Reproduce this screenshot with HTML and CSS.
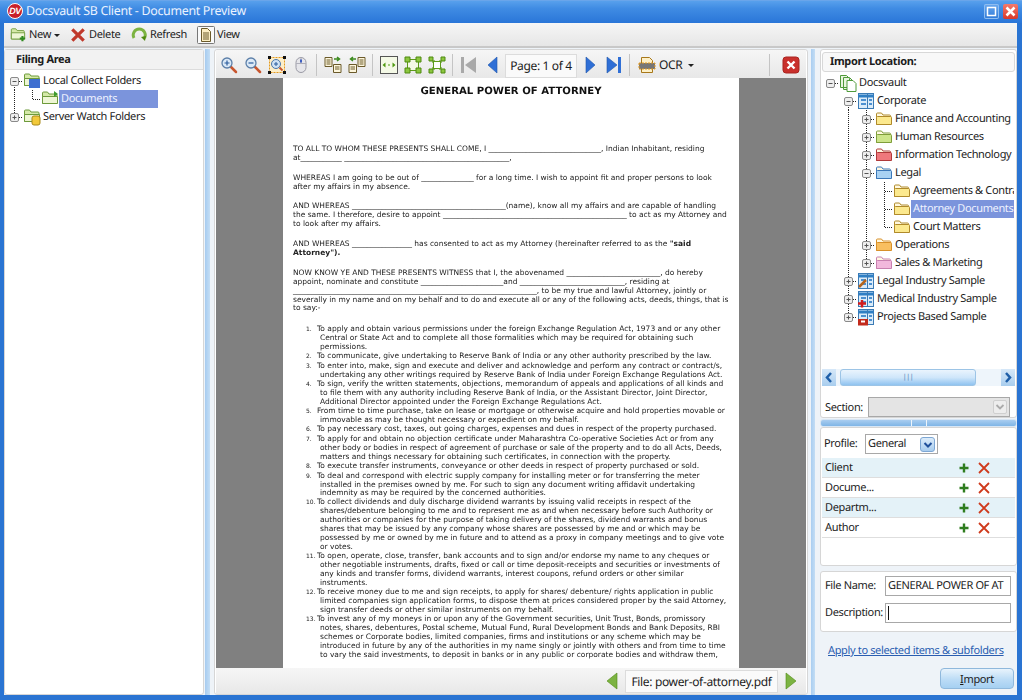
FILE: index.html
```html
<!DOCTYPE html>
<html lang="en">
<head>
<meta charset="utf-8">
<title>Docsvault SB Client - Document Preview</title>
<link rel="stylesheet" href="styles.css">
</head>
<body>
<svg class="defs" width="0" height="0" aria-hidden="true">
  <defs>
    <symbol id="cv" viewBox="0 0 18 18"><path d="M9.5 0V18" class="dot"/></symbol>
    <symbol id="ct" viewBox="0 0 18 18"><path d="M9.5 0V18M10 9.5H18" class="dot"/></symbol>
    <symbol id="cl" viewBox="0 0 18 18"><path d="M9.5 0V9.5H18" class="dot"/></symbol>
    <symbol id="cd" viewBox="0 0 18 18"><path d="M9.5 9V18M10 9.5H18" class="dot"/></symbol>
    <symbol id="cu" viewBox="0 0 18 18"><path d="M9.5 0V9.5H18" class="dot"/></symbol>
    <symbol id="cr" viewBox="0 0 18 18"><path d="M10 9.5H18" class="dot"/></symbol>
    <symbol id="plus" viewBox="0 0 18 18"><rect x="5.5" y="5.5" width="8" height="8" rx="1.5" fill="#eee" stroke="#8a8a8a"/><path d="M7.5 9.5h4M9.5 7.5v4" stroke="#555" fill="none"/></symbol>
    <symbol id="minus" viewBox="0 0 18 18"><rect x="5.5" y="5.5" width="8" height="8" rx="1.5" fill="#eee" stroke="#8a8a8a"/><path d="M7.5 9.5h4" stroke="#555" fill="none"/></symbol>
    <symbol id="folder" viewBox="0 0 18 18"><path d="M1.500 14.500V4q0-1 1-1h4l1.500 2h6.500q1 0 1 1v8.500z" fill="#fff8e0" stroke="currentColor"/><path d="M1.500 14.500V7.500q0-1 1-1h13q1 0 1 1v7z" fill="var(--fill)" stroke="currentColor"/></symbol>
    <symbol id="gfolder" viewBox="0 0 18 18"><path d="M1.500 13.500V3q0-1 1-1h4l1.500 2h7q1 0 1 1v8.500z" fill="#d5e9a8" stroke="#6d9a3a"/><path d="M1.500 13.500V6.500h15v7z" fill="#eef6d5" stroke="#6d9a3a"/></symbol>
    <symbol id="blue" viewBox="0 0 18 18"><rect x="1.500" y="1.500" width="15" height="15" fill="#dcecf9" stroke="#3b7bb5"/><path d="M1.500 4h15" stroke="#2f7fc4" stroke-width="3"/><path d="M10.500 1.500v15" stroke="#3b7bb5"/><path d="M4 7h5v2H4zM4 11h5v2H4zM12 7h3v2h-3zM12 11h3v2h-3z" fill="#4c90d0"/></symbol>
    <symbol id="pl" viewBox="0 0 14 14"><path d="M7 2.500v9M2.500 7h9" stroke="#2f7d1f" stroke-width="2.400" fill="none"/></symbol>
    <symbol id="xx" viewBox="0 0 14 14"><path d="M2 2l10 10M12 2L2 12" stroke="#cf3a1c" stroke-width="1.800" fill="none"/></symbol>
    <symbol id="lens" viewBox="0 0 18 18"><path d="M10.500 10.500l5.500 5.500" stroke="#c8562e" stroke-width="2.500" stroke-linecap="round"/><circle cx="7" cy="7" r="5" fill="#dbe9f7" stroke="#5c7fa8" stroke-width="1.300"/></symbol>
    <symbol id="pgs" viewBox="0 0 18 18"><path d="M1 1.500h7v9H1zM9.500 8.500H17v8H9.500z" fill="#fdf6dc" stroke="#6b5a2a"/><path d="M2.500 4h4M2.500 6h4M2.500 8h4M11 11h4.500M11 13h4.500" stroke="#6b5a2a"/><path d="M10 3h5M13 1l2.500 2L13 5" stroke="#3c8a1e" stroke-width="1.500" fill="none"/></symbol>
    <symbol id="corners" viewBox="0 0 18 18"><rect x="3.500" y="3.500" width="11" height="11" fill="#f4f9e6" stroke="#5d9a1a"/><path d="M1 1h5v5H1zM12 1h5v5h-5zM1 12h5v5H1zM12 12h5v5h-5z" fill="#8cc63f" stroke="#4f8a10"/></symbol>
  </defs>
</svg>
<div class="window">
  <header class="titlebar">
    <span class="logo">DV</span>
    <span class="title">Docsvault SB Client - Document Preview</span>
    <span class="winbtn max"><svg width="15" height="15" viewBox="0 0 15 15"><rect x="3.500" y="3.500" width="8" height="8" fill="none" stroke="#fff" stroke-width="1.500"/></svg></span>
    <span class="winbtn close"><svg width="15" height="15" viewBox="0 0 15 15"><path d="M3.500 3.500l8 8M11.500 3.500l-8 8" stroke="#fff" stroke-width="2.500"/></svg></span>
  </header>

  <nav class="mainbar">
    <span class="mbtn new"><svg class="i16" viewBox="0 0 18 18"><use href="#gfolder"/><path d="M14 10v6M11 13h6" stroke="#2f8a1f" stroke-width="2.400"/></svg>New<i class="caret"></i></span>
    <span class="mbtn del"><svg class="i16" viewBox="0 0 14 14"><path d="M2 2l10 10M12 2L2 12" stroke="#c0392b" stroke-width="2.800"/></svg>Delete</span>
    <span class="mbtn ref"><svg class="i16" viewBox="0 0 16 16"><path d="M3 11A6 6 0 1 1 13.500 11" fill="none" stroke="#7cb342" stroke-width="3"/><path d="M10 10l5-1-1 5z" fill="#4f8a10"/></svg>Refresh</span>
    <span class="mbtn view"><svg class="i18" viewBox="0 0 18 18"><rect x=".5" y=".5" width="17" height="17" rx="1" fill="#fafafa" stroke="#777"/><path d="M4.500 2.500h6l3 3v10h-9z" fill="#fbeec2" stroke="#6b5a2a"/><path d="M6 7h6M6 9h6M6 11h6M6 13h6" stroke="#6b5a2a"/></svg>View</span>
  </nav>

  <main class="workspace">
    <aside class="panel filing">
      <h2 class="filing-head">Filing Area</h2>
      <div class="tree left-tree">
        <div class="row"><svg class="c"><use href="#cd"/><use href="#minus"/></svg><svg class="c"><use href="#gfolder"/><rect x="6" y="7" width="11" height="9" fill="#3f6fd0"/></svg><span class="lbl">Local Collect Folders</span></div>
        <div class="row"><svg class="c"><use href="#cv"/></svg><svg class="c"><use href="#cl"/></svg><svg class="c"><use href="#gfolder"/><path d="M13 1l4 3-4 3z" fill="#3c9a2e"/></svg><span class="lbl sel">Documents</span></div>
        <div class="row"><svg class="c"><use href="#cu"/><use href="#plus"/></svg><svg class="c"><use href="#gfolder"/><rect x="9" y="8" width="8" height="9" rx="2" fill="#f2c93a" stroke="#a8891a"/></svg><span class="lbl">Server Watch Folders</span></div>
      </div>
    </aside>

    <div class="vsplit"></div>

    <section class="panel preview">
      <div class="doctools">
        <span class="tb"><svg class="i18"><use href="#lens"/><path d="M4.500 7h5M7 4.500v5" stroke="#2b5c9c" stroke-width="1.200"/></svg></span>
        <span class="tb"><svg class="i18"><use href="#lens"/><path d="M4.500 7h5" stroke="#2b5c9c" stroke-width="1.200"/></svg></span>
        <span class="tb"><svg class="i18"><rect x="1.500" y="1.500" width="15" height="15" fill="#fdeec8" stroke="#e59a1d" stroke-dasharray="2 1"/><path d="M0 0h3v3H0zM15 0h3v3h-3zM0 15h3v3H0zM15 15h3v3h-3z" fill="#111"/><circle cx="8" cy="8" r="4.500" fill="#cfe2f5" stroke="#4a76ab"/><path d="M6 8h4M8 6v4" stroke="#2b5c9c"/><path d="M11.500 11.500l3 3" stroke="#c8562e" stroke-width="2"/></svg></span>
        <span class="tb"><svg class="i18"><rect x="4" y="1.500" width="10" height="15" rx="5" fill="#e6e6ea" stroke="#9a9aa5"/><path d="M4 7.500h10M9 1.500v6" stroke="#b0b0ba"/><rect x="8" y="3.500" width="2" height="3" fill="#3f5fc0"/></svg></span>
        <i class="sep"></i>
        <span class="tb"><svg class="i18"><use href="#pgs"/></svg></span>
        <span class="tb"><svg class="i18"><g transform="matrix(-1 0 0 1 18 0)"><use href="#pgs"/></g></svg></span>
        <i class="sep"></i>
        <span class="tb"><svg class="i18"><rect x=".5" y=".5" width="17" height="17" fill="#f4f9e6" stroke="#555"/><path d="M2.500 9l3-2.500v5zM15.500 9l-3-2.500v5z" fill="#4f9a10"/><path d="M8 9h2" stroke="#4f9a10"/></svg></span>
        <span class="tb"><svg class="i18"><use href="#corners"/></svg></span>
        <span class="tb"><svg class="i18"><path d="M5 5l8 8M13 5l-8 8" stroke="#5d9a1a" stroke-width="3"/><rect x="5.500" y="5.500" width="7" height="7" fill="#fff" stroke="#5d9a1a"/><path d="M1 1h4v4H1zM13 1h4v4h-4zM1 13h4v4H1zM13 13h4v4h-4z" fill="#8cc63f" stroke="#4f8a10"/></svg></span>
        <i class="sep"></i>
        <span class="tb"><svg class="i18"><path d="M1 1h3v16H1z" fill="#a9a9a9"/><path d="M16 1v16L5 9z" fill="#a9a9a9"/></svg></span>
        <span class="tb"><svg class="i18"><path d="M13 1v16L4 9z" fill="#2f6fd6" stroke="#1f55aa" stroke-width=".6"/></svg></span>
        <span class="pagebox">Page: 1 of 4</span>
        <span class="tb"><svg class="i18"><path d="M5 1v16l9-8z" fill="#2f6fd6" stroke="#1f55aa" stroke-width=".6"/></svg></span>
        <span class="tb"><svg class="i18"><path d="M2 1v16l10-8z" fill="#2f6fd6" stroke="#1f55aa" stroke-width=".6"/><path d="M13 1h3v16h-3z" fill="#2f6fd6"/></svg></span>
        <i class="sep"></i>
        <span class="ocr"><svg class="i18"><path d="M3.500 1.500h8l3 3v12h-11z" fill="#fdf0c8" stroke="#a8781a"/><rect x="1" y="7" width="16" height="6" fill="#777" stroke="#e59a1d" stroke-dasharray="2 1"/></svg>OCR<i class="caret"></i></span>
        <span class="spring"></span>
        <i class="sep"></i>
        <span class="tb closedoc"><svg class="i18"><rect x="1" y="1" width="16" height="16" rx="3" fill="#c9302c" stroke="#a92420"/><path d="M5.500 5.500l7 7M12.500 5.500l-7 7" stroke="#fff" stroke-width="2.400"/></svg></span>
      </div>

      <div class="viewer">
        <article class="page">
          <h1 class="doc-title">GENERAL POWER OF ATTORNEY</h1>
          <p>TO ALL TO WHOM THESE PRESENTS SHALL COME, I ______________________________, Indian Inhabitant, residing<br>at___________ ____________________________________________,</p>
          <p>WHEREAS I am going to be out of ______________ for a long time. I wish to appoint fit and proper persons to look<br>after my affairs in my absence.</p>
          <p>AND WHEREAS _________________________________________(name), know all my affairs and are capable of handling<br>the same. I therefore, desire to appoint _________________________________________________ to act as my Attorney and<br>to look after my affairs.</p>
          <p>AND WHEREAS ________________ has consented to act as my Attorney (hereinafter referred to as the <b>"said<br>Attorney").</b></p>
          <p class="last">NOW KNOW YE AND THESE PRESENTS WITNESS that I, the abovenamed _________________________, do hereby<br>appoint, nominate and constitute ______________________and ____________________________, residing at<br>_________________________________________________________________, to be my true and lawful Attorney, jointly or<br>severally in my name and on my behalf and to do and execute all or any of the following acts, deeds, things, that is<br>to say:-</p>
          <div class="li"><span class="n">1.</span><span class="t">To apply and obtain various permissions under the foreign Exchange Regulation Act, 1973 and or any other<br>Central or State Act and to complete all those formalities which may be required for obtaining such<br>permissions.</span></div>
          <div class="li"><span class="n">2.</span><span class="t">To communicate, give undertaking to Reserve Bank of India or any other authority prescribed by the law.</span></div>
          <div class="li"><span class="n">3.</span><span class="t">To enter into, make, sign and execute and deliver and acknowledge and perform any contract or contract/s,<br>undertaking any other writings required by Reserve Bank of India under Foreign Exchange Regulations Act.</span></div>
          <div class="li"><span class="n">4.</span><span class="t">To sign, verify the written statements, objections, memorandum of appeals and applications of all kinds and<br>to file them with any authority including Reserve Bank of India, or the Assistant Director, Joint Director,<br>Additional Director appointed under the Foreign Exchange Regulations Act.</span></div>
          <div class="li"><span class="n">5.</span><span class="t">From time to time purchase, take on lease or mortgage or otherwise acquire and hold properties movable or<br>immovable as may be thought necessary or expedient on my behalf.</span></div>
          <div class="li"><span class="n">6.</span><span class="t">To pay necessary cost, taxes, out going charges, expenses and dues in respect of the property purchased.</span></div>
          <div class="li"><span class="n">7.</span><span class="t">To apply for and obtain no objection certificate under Maharashtra Co-operative Societies Act or from any<br>other body or bodies in respect of agreement of purchase or sale of the property and to do all Acts, Deeds,<br>matters and things necessary for obtaining such certificates, in connection with the property.</span></div>
          <div class="li"><span class="n">8.</span><span class="t">To execute transfer instruments, conveyance or other deeds in respect of property purchased or sold.</span></div>
          <div class="li"><span class="n">9.</span><span class="t">To deal and correspond with electric supply company for installing meter or for transferring the meter<br>installed in the premises owned by me. For such to sign any document writing affidavit undertaking<br>indemnity as may be required by the concerned authorities.</span></div>
          <div class="li"><span class="n">10.</span><span class="t">To collect dividends and duly discharge dividend warrants by issuing valid receipts in respect of the<br>shares/debenture belonging to me and to represent me as and when necessary before such Authority or<br>authorities or companies for the purpose of taking delivery of the shares, dividend warrants and bonus<br>shares that may be issued by any company whose shares are possessed by me and or which may be<br>possessed by me or owned by me in future and to attend as a proxy in company meetings and to give vote<br>or votes.</span></div>
          <div class="li"><span class="n">11.</span><span class="t">To open, operate, close, transfer, bank accounts and to sign and/or endorse my name to any cheques or<br>other negotiable instruments, drafts, fixed or call or time deposit-receipts and securities or investments of<br>any kinds and transfer forms, dividend warrants, interest coupons, refund orders or other similar<br>instruments.</span></div>
          <div class="li"><span class="n">12.</span><span class="t">To receive money due to me and sign receipts, to apply for shares/ debenture/ rights application in public<br>limited companies sign application forms, to dispose them at prices considered proper by the said Attorney,<br>sign transfer deeds or other similar instruments on my behalf.</span></div>
          <div class="li"><span class="n">13.</span><span class="t">To invest any of my moneys in or upon any of the Government securities, Unit Trust, Bonds, promissory<br>notes, shares, debentures, Postal scheme, Mutual Fund, Rural Development Bonds and Bank Deposits, RBI<br>schemes or Corporate bodies, limited companies, firms and institutions or any scheme which may be<br>introduced in future by any of the authorities in my name singly or jointly with others and from time to time<br>to vary the said investments, to deposit in banks or in any public or corporate bodies and withdraw them,</span></div>
        </article>
      </div>

      <div class="filebar">
        <svg class="i18"><path d="M14 1v16L4 9z" fill="#7cb342" stroke="#4f8a10" stroke-width=".6"/></svg>
        <span class="filebox">File: power-of-attorney.pdf</span>
        <svg class="i18"><path d="M4 1v16l10-8z" fill="#7cb342" stroke="#4f8a10" stroke-width=".6"/></svg>
      </div>
    </section>

    <div class="vsplit second"></div>

    <aside class="side">
      <section class="panel import">
        <h2 class="import-head">Import Location:</h2>
        <div class="tree right-tree">
          <div class="row"><svg class="c"><use href="#cr"/><use href="#minus"/></svg><svg class="c"><path d="M1.500 1.500h6l3 3v9h-9zM4.500 3.500h6l3 3v9h-9z" fill="#eaf5e0" stroke="#4f9a3a"/><path d="M8 6.500h6l3 3v8H8z" fill="#fff" stroke="#4f9a3a"/></svg><span class="lbl">Docsvault</span></div>
          <div class="row"><span class="c"></span><svg class="c"><use href="#cd"/><use href="#minus"/></svg><svg class="c"><use href="#blue"/></svg><span class="lbl">Corporate</span></div>
          <div class="row"><span class="c"></span><svg class="c"><use href="#cv"/></svg><svg class="c"><use href="#ct"/><use href="#plus"/></svg><svg class="c f-yellow"><use href="#folder"/></svg><span class="lbl">Finance and Accounting</span></div>
          <div class="row"><span class="c"></span><svg class="c"><use href="#cv"/></svg><svg class="c"><use href="#ct"/><use href="#plus"/></svg><svg class="c f-green"><use href="#folder"/></svg><span class="lbl">Human Resources</span></div>
          <div class="row"><span class="c"></span><svg class="c"><use href="#cv"/></svg><svg class="c"><use href="#ct"/><use href="#plus"/></svg><svg class="c f-red"><use href="#folder"/></svg><span class="lbl">Information Technology</span></div>
          <div class="row"><span class="c"></span><svg class="c"><use href="#cv"/></svg><svg class="c"><use href="#ct"/><use href="#minus"/></svg><svg class="c f-blue"><use href="#folder"/></svg><span class="lbl">Legal</span></div>
          <div class="row"><span class="c"></span><svg class="c"><use href="#cv"/></svg><svg class="c"><use href="#cv"/></svg><svg class="c"><use href="#ct"/></svg><svg class="c f-yellow"><use href="#folder"/></svg><span class="lbl">Agreements &amp; Contracts</span></div>
          <div class="row"><span class="c"></span><svg class="c"><use href="#cv"/></svg><svg class="c"><use href="#cv"/></svg><svg class="c"><use href="#ct"/></svg><svg class="c f-yellow"><use href="#folder"/></svg><span class="lbl sel">Attorney Documents</span></div>
          <div class="row"><span class="c"></span><svg class="c"><use href="#cv"/></svg><svg class="c"><use href="#cv"/></svg><svg class="c"><use href="#cl"/></svg><svg class="c f-yellow"><use href="#folder"/></svg><span class="lbl">Court Matters</span></div>
          <div class="row"><span class="c"></span><svg class="c"><use href="#cv"/></svg><svg class="c"><use href="#ct"/><use href="#plus"/></svg><svg class="c f-orange"><use href="#folder"/></svg><span class="lbl">Operations</span></div>
          <div class="row"><span class="c"></span><svg class="c"><use href="#cv"/></svg><svg class="c"><use href="#cl"/><use href="#plus"/></svg><svg class="c f-pink"><use href="#folder"/></svg><span class="lbl">Sales &amp; Marketing</span></div>
          <div class="row"><span class="c"></span><svg class="c"><use href="#ct"/><use href="#plus"/></svg><svg class="c"><use href="#blue"/><path d="M2 15l7-7" stroke="#b5651d" stroke-width="2.500"/></svg><span class="lbl">Legal Industry Sample</span></div>
          <div class="row"><span class="c"></span><svg class="c"><use href="#ct"/><use href="#plus"/></svg><svg class="c"><use href="#blue"/><path d="M5 10v7.500M1 13.500h8" stroke="#d21c1c" stroke-width="2.500"/></svg><span class="lbl">Medical Industry Sample</span></div>
          <div class="row"><span class="c"></span><svg class="c"><use href="#cl"/><use href="#plus"/></svg><svg class="c"><use href="#blue"/><rect x="1" y="11" width="10" height="6.500" fill="#c22a1c"/><path d="M4 13.500h4" stroke="#fff" stroke-width="2"/></svg><span class="lbl">Projects Based Sample</span></div>
        </div>
        <div class="hscroll">
          <span class="sb-btn"><svg width="14" height="17" viewBox="0 0 14 17"><path d="M9 4L5 8.500 9 13" fill="none" stroke="#1f5fa8" stroke-width="2.500"/></svg></span>
          <span class="sb-track"><span class="sb-thumb">|||</span></span>
          <span class="sb-btn"><svg width="14" height="17" viewBox="0 0 14 17"><path d="M5 4l4 4.500L5 13" fill="none" stroke="#1f5fa8" stroke-width="2.500"/></svg></span>
        </div>
        <div class="section-row">
          <label class="sec-label">Section:</label>
          <span class="sec-select"><span class="sec-arrow"><svg width="12" height="12" viewBox="0 0 12 12"><path d="M2.500 4L6 7.500 9.500 4" fill="none" stroke="#aaa" stroke-width="1.800"/></svg></span></span>
        </div>
      </section>

      <div class="hsplit"><span class="grip"></span></div>

      <section class="panel profile">
        <div class="profile-row">
          <label class="prof-label">Profile:</label>
          <span class="prof-select">General<span class="prof-arrow"><svg width="12" height="12" viewBox="0 0 12 12"><path d="M2.500 4L6 7.500 9.500 4" fill="none" stroke="#1f4f9a" stroke-width="2"/></svg></span></span>
        </div>
        <div class="meta alt"><span class="meta-name">Client</span><svg class="act"><use href="#pl"/></svg><svg class="act"><use href="#xx"/></svg></div>
        <div class="meta"><span class="meta-name">Docume...</span><svg class="act"><use href="#pl"/></svg><svg class="act"><use href="#xx"/></svg></div>
        <div class="meta alt"><span class="meta-name">Departm...</span><svg class="act"><use href="#pl"/></svg><svg class="act"><use href="#xx"/></svg></div>
        <div class="meta"><span class="meta-name">Author</span><svg class="act"><use href="#pl"/></svg><svg class="act"><use href="#xx"/></svg></div>
      </section>

      <section class="panel fields">
        <div class="field"><label>File Name:</label><span class="input">GENERAL POWER OF AT</span></div>
        <div class="field"><label>Description:</label><span class="input"><i class="cursor"></i></span></div>
      </section>

      <a class="apply" href="#">Apply to selected items &amp; subfolders</a>
      <div class="import-wrap"><button class="import-btn"><u>I</u>mport</button></div>
    </aside>
  </main>
</div>
</body>
</html>
```

FILE: styles.css
```css
* { box-sizing: border-box; }
html, body { margin: 0; padding: 0; }
body {
  width: 1022px; height: 700px; overflow: hidden;
  font: 11px/14px "Noto Sans", "DejaVu Sans", sans-serif;
  letter-spacing: -.35px;
  text-rendering: geometricPrecision;
  color: #1c1c1c;
}
.defs { display: block; height: 0; }
.dot { fill: none; stroke: #222; stroke-dasharray: 1 1; }

.window {
  width: 1022px; height: 700px; display: flex; flex-direction: column;
  background: #2a74d2; padding: 0 5px 5px 4px;
  border-top: 1px solid #6aa5ea;
}

.titlebar {
  height: 22px; margin: 0 -5px 0 -4px; padding: 0 5px 2px 7px;
  display: flex; align-items: center; gap: 4px;
  background: linear-gradient(#58a0ec, #3f8be3 35%, #2a76d8);
}
.logo {
  width: 16px; height: 16px; border-radius: 50%; background: #c8202a; color: #fff;
  font: italic bold 9px/14px "Liberation Sans", sans-serif; text-align: center;
  border: 1px solid #fff; letter-spacing: -.5px;
}
.title { flex: 1; font-size: 12.400px; letter-spacing: -.3px; color: #eaf2ff; margin-left: -1px; }
.winbtn { width: 15px; height: 15px; border-radius: 2px; display: block; }
.winbtn svg { display: block; }
.max { background: linear-gradient(#6aa8ee, #2f7ad8); box-shadow: 0 0 0 1px #8fbdf0 inset; }
.close { background: linear-gradient(#f47a6c, #d9382a); margin-right: -1px; }

.mainbar {
  height: 25px; display: flex; align-items: center; padding-left: 6px; flex: none;
  background: linear-gradient(#f6f6f6, #e6e6e6);
  border-bottom: 2px solid #c8c8c8;
}
.mbtn { display: flex; align-items: center; }
.i16 { width: 16px; height: 16px; margin-right: 3px; flex: none; }
.i18 { width: 18px; height: 18px; flex: none; display: block; }
.view .i18 { margin-right: 2px; }
.caret {
  display: inline-block; width: 0; height: 0; margin-left: 3px; margin-top: 1px;
  border: 3px solid transparent; border-top: 3px solid #222; border-bottom: 0;
}
.new { width: 60px; }
.del { width: 61px; }
.ref { width: 66px; }

.workspace { flex: 1; min-height: 0; display: flex; background: #eef3f8; padding-top: 1px; }

.panel { background: #fff; border: 1px solid #d6d6d6; border-radius: 3px; }

.filing { width: 200px; flex: none; }
.filing-head {
  margin: 0; height: 20px; font-size: 11px; line-height: 19px; font-weight: bold;
  padding-left: 11px; background: #f2f2f2; border-bottom: 1px solid #dcdcdc;
}
.left-tree { padding-top: 2px; }
.row { display: flex; height: 18px; align-items: center; white-space: nowrap; }
.c { width: 18px; height: 18px; flex: none; display: block; }
.lbl { padding: 0 2px; line-height: 18px; }
.sel { background: #7b94dc; color: #eef2ff; }
.left-tree .sel { width: 99px; }

.f-yellow { color: #b08a2a; --fill: #fce98e; }
.f-green { color: #7f9e3a; --fill: #cde58a; }
.f-red { color: #b03a3a; --fill: #f0787c; }
.f-blue { color: #3c78b8; --fill: #a9d2f3; }
.f-orange { color: #d8902a; --fill: #f9bf60; }
.f-pink { color: #c880b0; --fill: #f2b8dc; }

.vsplit {
  width: 10px; flex: none;
  background: linear-gradient(90deg, #eef3f8 15%, #a9cdf0 15%, #c4def5 60%, #eef3f8 60%);
}
.vsplit.second { width: 13px; background: linear-gradient(90deg, #eef3f8 22%, #a9cdf0 22%, #c4def5 55%, #eef3f8 55%); }

.preview { width: 594px; flex: none; display: flex; flex-direction: column; padding: 0 1px; }
.doctools {
  height: 28px; flex: none; display: flex; align-items: center; padding: 2px 0 0 1px;
  background: linear-gradient(#f6f6f6, #e8e8e8);
}
.tb { width: 24px; height: 24px; display: flex; align-items: center; justify-content: center; flex: none; }
.sep { width: 1px; height: 22px; background: #c4c4c4; margin: 0 4px 0 3px; flex: none; }
.pagebox {
  width: 72px; height: 24px; margin: 1px 1px 0 0; background: #fafafa; border: 1px solid #dcdcdc;
  line-height: 22px; text-align: center; flex: none; font-size: 12px;
}
.ocr { display: flex; align-items: center; margin-left: 4px; font-size: 12px; }
.ocr .i18 { margin-right: 3px; }
.ocr .caret { margin-left: 6px; }
.spring { flex: 1; }
.closedoc { margin-right: 3px; margin-left: 5px; }

.viewer {
  height: 590px; flex: none; overflow: hidden; background: #808080;
  display: flex; justify-content: center;
}
.page {
  width: 456px; background: #fff; padding: 8px 0 0 10px; flex: none;
  font: 7.500px/8.960px "DejaVu Sans", sans-serif; letter-spacing: 0; color: #222; white-space: nowrap;
  filter: blur(.25px);
}
.doc-title {
  margin: 0 0 46.900px; font-size: 10.150px; line-height: 12px; font-weight: bold; text-align: center;
  color: #111; padding-right: 10px;
}
.page p { margin: 0 0 10.800px; }
.page p.last { margin-bottom: 11.900px; }
.li { display: flex; padding-left: 13px; }
.n { width: 11px; flex: none; font-size: 6px; padding-top: 1px; }
.t { display: block; padding-left: 3px; text-indent: -3px; }

.filebar {
  flex: 1; display: flex; align-items: center; justify-content: flex-end; gap: 4px; padding-right: 6px;
  background: linear-gradient(#f6f6f6, #e8e8e8);
}
.filebox {
  width: 153px; height: 23px; background: #fafafa; border: 1px solid #dcdcdc; text-align: center;
  line-height: 22px; font-size: 12px; white-space: nowrap;
}

.side { width: 197px; flex: none; display: flex; flex-direction: column; margin-left: -1px; }
.import { height: 369px; flex: none; padding: 2px 1px 0; display: flex; flex-direction: column; }
.import-head {
  margin: 0; height: 20px; font-size: 11px; line-height: 18px; font-weight: bold;
  padding-left: 7px; background: #f8f8f8; border: 1px solid #d8d8d8; border-radius: 3px; flex: none;
}
.right-tree { height: 297px; overflow: hidden; padding-top: 2px; margin-left: -1px; flex: none; }
.right-tree .row { width: 193px; overflow: hidden; }
.right-tree .lbl { flex: 1; }
.hscroll { height: 17px; display: flex; flex: none; background: #dbe9f6; border-radius: 2px; }
.sb-btn { width: 14px; flex: none; background: linear-gradient(#d6e8f8, #a8cdee); }
.sb-btn svg { display: block; }
.sb-track { flex: 1; padding-left: 4px; background: #eef5fb; display: block; }
.sb-thumb {
  display: block; width: 136px; height: 17px; text-align: center; font-size: 7px; line-height: 15px; color: #4a7ab0;
  background: linear-gradient(#eaf4fd, #cfe6fa 50%, #8fc3f0); border: 1px solid #9cc4e6; border-radius: 3px;
}
.section-row { display: flex; align-items: center; padding: 11px 5px 0 3px; }
.sec-label { width: 43px; flex: none; padding-top: 1px; }
.sec-select {
  flex: 1; height: 20px; background: #e4e4e4; border: 1px solid #a8a8a8;
  display: flex; justify-content: flex-end; align-items: center; padding-right: 2px;
}
.sec-arrow { width: 14px; height: 14px; background: #ededed; border: 1px solid #cfcfcf; border-radius: 2px; display: block; }
.sec-arrow svg { display: block; }

.hsplit {
  height: 8px; flex: none; margin: 1px 0 0; background: linear-gradient(#a9cdf0, #7fb5e6);
  border-radius: 3px; border: 1px solid #d8e6f4; display: flex; justify-content: center;
}
.grip { width: 16px; border: solid #eef5fb; border-width: 0 1px; }

.profile { height: 139px; flex: none; padding: 6px 1px 0; }
.profile-row { display: flex; align-items: center; height: 20px; padding-left: 2px; margin-bottom: 4px; }
.prof-label { width: 41px; flex: none; }
.prof-select {
  width: 73px; height: 20px; border: 1px solid #a8a8a8; background: #fff; line-height: 18px; padding-left: 2px;
  display: flex; justify-content: space-between; align-items: center;
}
.prof-arrow { width: 15px; height: 15px; margin-right: 2px; background: linear-gradient(#dcecfa, #a8ccee); border: 1px solid #7da7d4; border-radius: 3px; display: block; }
.prof-arrow svg { display: block; margin: 1px; }
.meta {
  display: flex; align-items: center; height: 20px; padding-left: 3px; border-bottom: 1px solid #dedede;
}
.meta.alt { background: #e4f2f8; }
.meta-name { width: 132px; }
.act { width: 14px; height: 14px; margin-right: 6px; display: block; flex: none; }

.fields { height: 61px; flex: none; margin-top: 5px; padding: 4px 5px 0 4px; }
.field { display: flex; align-items: center; height: 20px; margin-bottom: 7px; }
.field label { width: 60px; flex: none; }
.input { flex: 1; height: 20px; border: 1px solid #a8a8a8; background: #fff; padding-left: 2px; line-height: 18px; overflow: hidden; white-space: nowrap; display: block; }
.cursor { display: block; width: 1px; height: 14px; margin-top: 2px; background: #111; }

.apply { display: block; margin: 12px 0 0 8px; color: #2a5db0; text-decoration: underline; line-height: 14px; white-space: nowrap; }
.import-wrap { display: flex; justify-content: flex-end; padding: 10px 3px 0 0; }
.import-btn {
  width: 74px; height: 21px; border: 1px solid #8fb8dc; border-radius: 4px; font: inherit; letter-spacing: inherit; color: #1c1c1c; padding: 0;
  background: linear-gradient(#e8f3fc, #bcdcf6 55%, #a6d0f2);
}
```
